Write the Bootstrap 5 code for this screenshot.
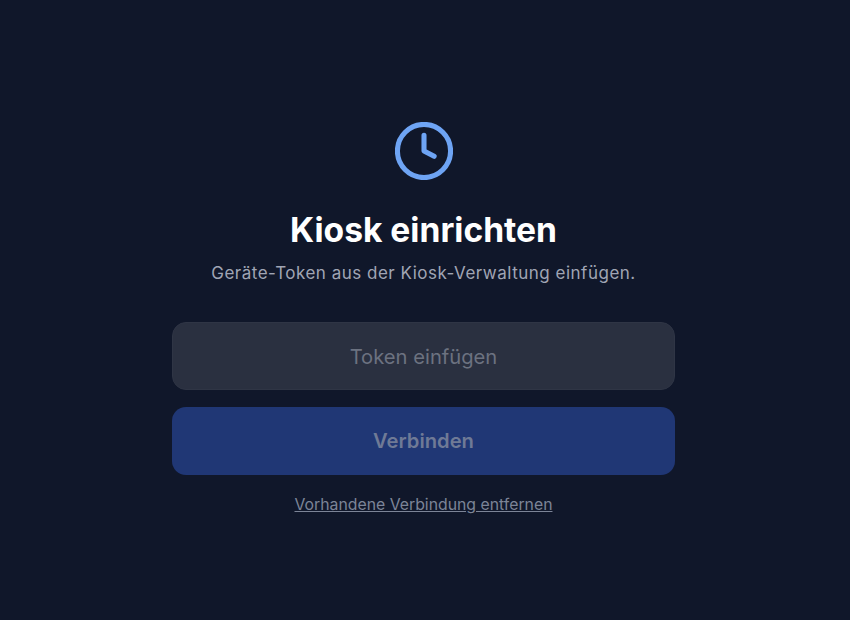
<!DOCTYPE html>
<html lang="de">
<head>
  <meta charset="UTF-8" />
  <title>Kiosk einrichten</title>
  <link href="https://cdn.jsdelivr.net/npm/bootstrap@5.3.3/dist/css/bootstrap.min.css" rel="stylesheet">
  <style>
    body {
      background: #10172a;
      font-family: Inter, sans-serif;
      padding: 122px 3px 0 0;
    }
    .setup-box { width: 503px; }
    .setup-icon { width: 58px; height: 58px; color: #6ea4f4; display: block; margin: 0 auto; }
    .setup-title { font-size: 33.6px; font-weight: 700; line-height: 40px; color: #fff; margin: 30px 0 11px; }
    .setup-sub { font-size: 17px; letter-spacing: .5px; line-height: 24px; color: #a0a5b4; margin-bottom: 37px; }
    .token-input {
      height: 68px; border-radius: 14px; font-size: 20.2px; text-align: center;
      background: #2a3040; border: 1px solid #2f3545; color: #fff;
    }
    .token-input::placeholder { color: #6c7280; opacity: 1; }
    .token-input:focus { background: #2a3040; color: #fff; }
    .connect-btn {
      height: 68px; border-radius: 14px; font-size: 20.2px; font-weight: 600;
      background: #203775; border: 0; color: #6f7a96; margin-top: 17px;
    }
    .connect-btn:disabled { background: #203775; color: #6f7a96; opacity: 1; }
    .reset-link { font-size: 15.8px; color: #7c8497; margin-top: 18px; display: inline-block; }
  </style>
</head>
<body class="d-flex align-items-start justify-content-center vh-100 m-0">
  <div class="setup-box text-center">
    <svg class="setup-icon" viewBox="0 0 24 24" fill="none" stroke="currentColor" stroke-width="2.1" stroke-linecap="round" stroke-linejoin="round">
      <circle cx="12" cy="12" r="11"/>
      <path d="M12 5.5V12l4.2 2.2"/>
    </svg>
    <h1 class="setup-title">Kiosk einrichten</h1>
    <p class="setup-sub">Geräte-Token aus der Kiosk-Verwaltung einfügen.</p>
    <input type="text" class="form-control token-input" placeholder="Token einfügen">
    <button class="btn connect-btn w-100" disabled>Verbinden</button>
    <a href="#" class="reset-link">Vorhandene Verbindung entfernen</a>
  </div>
  <script src="https://cdn.jsdelivr.net/npm/bootstrap@5.3.3/dist/js/bootstrap.bundle.min.js"></script>
</body>
</html>
